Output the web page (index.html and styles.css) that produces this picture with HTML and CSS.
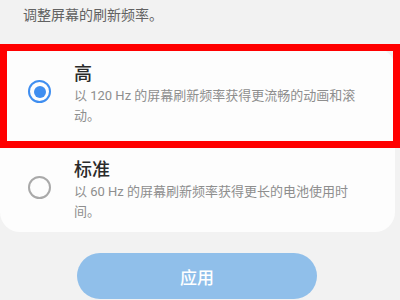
FILE: index.html
```html
<!DOCTYPE html>
<html lang="zh-CN">
<head>
<meta charset="utf-8">
<title>刷新频率</title>
<link rel="stylesheet" href="styles.css">
</head>
<body>
<div class="page">
  <p class="intro">调整屏幕的刷新频率。</p>
  <div class="card">
    <div class="option">
      <span class="radio checked"></span>
      <div class="text">
        <div class="name">高</div>
        <div class="desc">以 120 Hz 的屏幕刷新频率获得更流畅的动画和滚动。</div>
      </div>
    </div>
    <div class="option">
      <span class="radio"></span>
      <div class="text">
        <div class="name">标准</div>
        <div class="desc">以 60 Hz 的屏幕刷新频率获得更长的电池使用时间。</div>
      </div>
    </div>
  </div>
  <div class="actions">
    <button class="apply">应用</button>
  </div>
  <div class="highlight"></div>
</div>
</body>
</html>
```
FILE: styles.css
```css
html, body {
  margin: 0;
  padding: 0;
  background: #f2f2f2;
}
body {
  font-family: "Roboto", "Noto Sans CJK SC", sans-serif;
  width: 400px;
  height: 300px;
  overflow: hidden;
}
.page {
  position: relative;
  height: 300px;
}
.intro {
  margin: 0;
  padding: 5px 0 0 23px;
  font-size: 14px;
  line-height: 20px;
  color: #626262;
}
.card {
  margin: 23px 5px 0 0;
  background: #fdfdfd;
  border-radius: 20px;
}
.option {
  display: flex;
  align-items: flex-start;
  padding: 16px 29px 16px 28px;
}
.option:first-child {
  padding-top: 14px;
}
.option:last-child {
  padding-bottom: 10px;
}
.radio {
  flex: none;
  box-sizing: border-box;
  width: 23px;
  height: 23px;
  margin-top: 18px;
  margin-right: 23px;
  border: 2px solid #a9a9a9;
  border-radius: 50%;
  display: flex;
  align-items: center;
  justify-content: center;
}
.radio.checked {
  border-color: #3f8ef0;
}
.radio.checked::after {
  content: "";
  width: 12px;
  height: 12px;
  border-radius: 50%;
  background: #3f8ef0;
}
.text {
  flex: 1;
  min-width: 0;
}
.name {
  font-size: 18px;
  line-height: 24px;
  font-weight: 500;
  color: #2a2a2a;
}
.desc {
  font-size: 13px;
  line-height: 20px;
  color: #8e8e8e;
}
.actions {
  display: flex;
  padding: 21px 0 0 77px;
}
.apply {
  width: 240px;
  height: 46px;
  border: none;
  border-radius: 23px;
  background: #90bfea;
  color: #ffffff;
  font-family: "Roboto", "Noto Sans CJK SC", sans-serif;
  font-size: 17px;
  font-weight: 500;
  padding: 0;
}
.highlight {
  position: absolute;
  left: 0;
  top: 44px;
  width: 400px;
  height: 104px;
  box-sizing: border-box;
  border: 7px solid #ff0000;
}
```
